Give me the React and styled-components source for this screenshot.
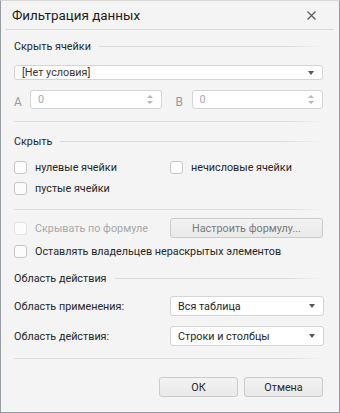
import React from 'react';
import styled, { createGlobalStyle } from 'styled-components';

const Global = createGlobalStyle`
  html, body { margin: 0; padding: 0; background: #f4f4f4; }
  body { font-family: Roboto, "Noto Sans", sans-serif; font-size: 10.8px; color: #262626; }
`;

const Dialog = styled.div`
  width: 340px;
  height: 413px;
  box-sizing: border-box;
  border: 1px solid #979ca3;
  border-top-color: #d8d8d8;
  background: #f4f4f4;
  display: flex;
  flex-direction: column;
`;

const TitleBar = styled.div`
  height: 28px;
  margin: 0 5px;
  padding: 0 6px;
  border-bottom: 1px solid #d9d9d9;
  display: flex;
  align-items: center;
  justify-content: space-between;
`;

const Title = styled.div`
  font-size: 13.4px;
  color: #1b1b1b;
`;

const Close = styled.div`
  width: 20px;
  display: flex;
  justify-content: center;
  margin-right: 7px;
`;

const Body = styled.div`
  padding: 0 16px 0 13px;
  display: flex;
  flex-direction: column;
`;

const Section = styled.div`
  display: flex;
  align-items: center;
  gap: 8px;
  height: 16px;
  margin-top: ${p => p.$top}px;
  &::after {
    content: '';
    flex: 1;
    height: 1px;
    background: linear-gradient(to right, #dcdcdc 85%, rgba(220,220,220,0));
  }
`;

const Divider = styled.div`
  height: 1px;
  margin-top: ${p => p.$top}px;
  background: linear-gradient(to right, #dedede 90%, rgba(222,222,222,0));
`;

const Select = styled.div`
  height: 20px;
  box-sizing: border-box;
  border: 1px solid #d4d4d4;
  border-radius: 3px;
  background: #fff;
  display: flex;
  align-items: center;
  padding: 0 8px 0 7px;
  flex: ${p => (p.$half ? '0 0 154px' : '1')};
  margin-top: ${p => p.$top || 0}px;
  color: ${p => p.$color || '#262626'};
`;

const SelectText = styled.span`
  flex: 1;
`;

const Arrow = styled.span`
  width: 0;
  height: 0;
  border-left: 3.5px solid transparent;
  border-right: 3.5px solid transparent;
  border-top: 4px solid #555;
`;

const Row = styled.div`
  display: flex;
  align-items: center;
  margin-top: ${p => p.$top || 0}px;
  height: ${p => p.$h || 16}px;
`;

const Pair = styled.div`
  flex: 1;
  display: flex;
  align-items: flex-end;
  gap: 5px;
  height: 100%;
  & + & { margin-left: 14px; }
`;

const FieldLabel = styled.span`
  color: #9a9a9a;
  font-size: 12px;
  width: 11px;
  line-height: 14px;
`;

const NumInput = styled.div`
  flex: 1;
  height: 100%;
  box-sizing: border-box;
  border: 1px solid #d4d4d4;
  border-radius: 3px;
  background: #fff;
  display: flex;
  align-items: center;
  padding: 0 8px 0 7px;
  color: #a5abb3;
`;

const Spin = styled.span`
  display: flex;
  flex-direction: column;
  gap: 3px;
  margin-left: auto;
  span { width: 0; height: 0; border-left: 3px solid transparent; border-right: 3px solid transparent; }
  span:first-child { border-bottom: 3px solid #b8b8b8; }
  span:last-child { border-top: 3px solid #b8b8b8; }
`;

const Check = styled.label`
  display: flex;
  align-items: center;
  gap: 8px;
  flex: ${p => (p.$half ? '0 0 156px' : 'none')};
  color: ${p => (p.$disabled ? '#a8a8a8' : '#262626')};
  &::before {
    content: '';
    width: 11px;
    height: 11px;
    border: 1px solid ${p => (p.$disabled ? '#e2e2e2' : '#c6c6c6')};
    border-radius: 3px;
    background: #fcfcfc;
  }
`;

const Button = styled.div`
  height: 20px;
  box-sizing: border-box;
  border: 1px solid #cbcbcb;
  border-radius: 3px;
  background: linear-gradient(#f3f3f3, #e9e9e9);
  display: flex;
  align-items: center;
  justify-content: center;
  width: ${p => p.$w}px;
  color: ${p => p.$color || '#262626'};
`;

const Label = styled.span`
  flex: 0 0 156px;
`;

const Footer = styled.div`
  display: flex;
  justify-content: flex-end;
  gap: 6px;
  margin-top: 18px;
`;

export default function App() {
  return (
    <>
      <Global />
      <Dialog>
        <TitleBar>
          <Title>Фильтрация данных</Title>
          <Close>
            <svg width="9" height="9" viewBox="0 0 9 9">
              <path d="M0.5 0.5L8.5 8.5M8.5 0.5L0.5 8.5" stroke="#5a5a5a" strokeWidth="1.2" />
            </svg>
          </Close>
        </TitleBar>
        <Body>
          <Section $top={8}>Скрыть ячейки</Section>
          <Select $top={11} $color="#3a3434">
            <SelectText>[Нет условия]</SelectText>
            <Arrow />
          </Select>
          <Row $top={10} $h={19}>
            <Pair>
              <FieldLabel>A</FieldLabel>
              <NumInput>0<Spin><span /><span /></Spin></NumInput>
            </Pair>
            <Pair>
              <FieldLabel>B</FieldLabel>
              <NumInput>0<Spin><span /><span /></Spin></NumInput>
            </Pair>
          </Row>
          <Divider $top={12} />
          <Section $top={11}>Скрыть</Section>
          <Row $top={10}>
            <Check $half>нулевые ячейки</Check>
            <Check>нечисловые ячейки</Check>
          </Row>
          <Row $top={5}>
            <Check>пустые ячейки</Check>
          </Row>
          <Divider $top={13} />
          <Row $top={8} $h={20}>
            <Check $half $disabled>Скрывать по формуле</Check>
            <Button $w={154} $color="#7a7a7a">Настроить формулу...</Button>
          </Row>
          <Row $top={5}>
            <Check>Оставлять владельцев нераскрытых элементов</Check>
          </Row>
          <Section $top={11}>Область действия</Section>
          <Row $top={10} $h={20}>
            <Label>Область применения:</Label>
            <Select $half><SelectText>Вся таблица</SelectText><Arrow /></Select>
          </Row>
          <Row $top={10} $h={20}>
            <Label>Область действия:</Label>
            <Select $half><SelectText>Строки и столбцы</SelectText><Arrow /></Select>
          </Row>
          <Divider $top={12} />
          <Footer>
            <Button $w={79}>ОК</Button>
            <Button $w={79}>Отмена</Button>
          </Footer>
        </Body>
      </Dialog>
    </>
  );
}
